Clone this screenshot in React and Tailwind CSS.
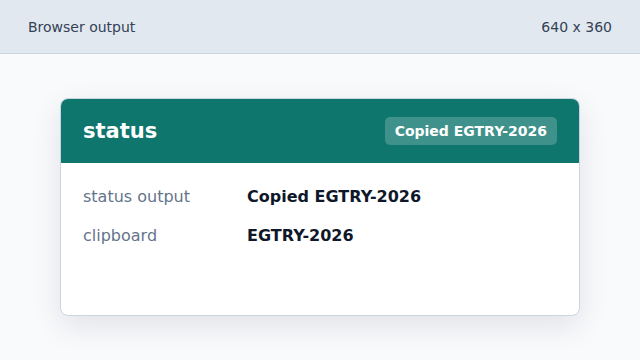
export default function App() {
  return (
    <div className="w-[640px] h-[360px] bg-[#f8fafc] overflow-hidden" style={{ fontFamily: '"DejaVu Sans", sans-serif' }}>
      <div className="h-[54px] bg-[#e2e8f0] border-b border-[#cbd5e1] flex items-center justify-between px-[28px] pt-[1px] text-[14px] text-[#334155]">
        <span>Browser output</span>
        <span>640 x 360</span>
      </div>
      <div className="mt-[44px] mx-auto w-[520px] h-[218px] bg-white rounded-[8px] border border-[#cbd5e1] overflow-hidden shadow-[0_10px_30px_rgba(15,23,42,0.10)]">
        <div className="h-[64px] bg-[#0f766e] flex items-center justify-between pl-[22px] pr-[22px]">
          <span className="text-white text-[21px] font-bold pt-[2px]">status</span>
          <span className="h-[28px] px-[10px] flex items-center rounded-[5px] bg-white/20 text-white text-[14px] font-bold">Copied EGTRY-2026</span>
        </div>
        <div className="pt-[23px] pl-[22px] flex flex-col gap-[17px] text-[16px]">
          <div className="flex h-[22px] items-center">
            <span className="w-[164px] text-[#64748b]">status output</span>
            <span className="font-bold text-[#0f172a]">Copied EGTRY-2026</span>
          </div>
          <div className="flex h-[22px] items-center">
            <span className="w-[164px] text-[#64748b]">clipboard</span>
            <span className="font-bold text-[#0f172a]">EGTRY-2026</span>
          </div>
        </div>
      </div>
    </div>
  );
}
